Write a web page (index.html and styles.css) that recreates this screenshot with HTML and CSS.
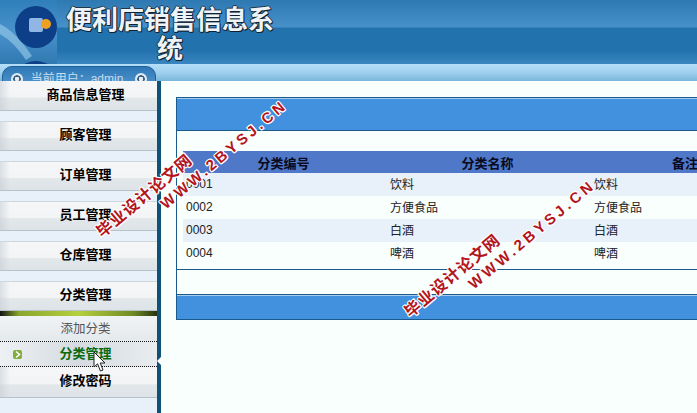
FILE: index.html
```
<!DOCTYPE html>
<html lang="zh">
<head>
<meta charset="utf-8">
<title>便利店销售信息系统</title>
<link rel="stylesheet" href="styles.css">
</head>
<body>
<div class="page">
  <header class="header">
    <div class="logo">
      <svg width="57" height="64" viewBox="0 0 57 64">
        <defs>
          <linearGradient id="bg" x1="0" y1="0" x2="0" y2="1"><stop offset="0" stop-color="#2f7fbb"/><stop offset="0.5" stop-color="#4a92cc"/><stop offset="1" stop-color="#2f78b0"/></linearGradient>
        </defs>
        <rect width="57" height="64" fill="url(#bg)"/>
        <path d="M0 24 Q16 32 32 56 L26 60 Q14 42 0 34Z" fill="#8fc3e6" opacity=".7"/>
        <circle cx="36" cy="27" r="21" fill="#0c3f87"/>
        <rect x="29" y="18" width="14" height="14" rx="2" fill="#8fb6e4"/>
        <circle cx="46" cy="24" r="5" fill="#f0a020"/>
        <circle cx="36" cy="84" r="23" fill="#0c3f87"/>
      </svg>
    </div>
    <h1 class="title">便利店销售信息系统</h1>
  </header>
  <div class="band">
    <div class="user-tab">
      <span class="radio"></span>
      <span class="user-text">当前用户：admin</span>
      <span class="radio"></span>
    </div>
  </div>
  <div class="body">
    <nav class="sidebar">
      <a class="nav first">商品信息管理</a>
      <a class="nav">顾客管理</a>
      <a class="nav">订单管理</a>
      <a class="nav">员工管理</a>
      <a class="nav">仓库管理</a>
      <a class="nav open">分类管理</a>
      <div class="rule"></div>
      <a class="sub">添加分类</a>
      <a class="sub active"><span class="bullet"><svg width="9" height="9" viewBox="0 0 9 9"><path d="M3 1.5 L6.5 4.5 L3 7.5" fill="none" stroke="#fff" stroke-width="1.6"/></svg></span>分类管理</a>
      <a class="nav last">修改密码</a>
    </nav>
    <div class="divider"><span class="notch"></span></div>
    <main class="main">
      <section class="panel">
        <div class="bar top"></div>
        <div class="content">
          <table class="grid">
            <thead><tr><th>分类编号</th><th>分类名称</th><th class="wide">备注</th></tr></thead>
            <tbody>
              <tr><td>0001</td><td>饮料</td><td>饮料</td></tr>
              <tr><td>0002</td><td>方便食品</td><td>方便食品</td></tr>
              <tr><td>0003</td><td>白酒</td><td>白酒</td></tr>
              <tr><td>0004</td><td>啤酒</td><td>啤酒</td></tr>
            </tbody>
          </table>
        </div>
        <div class="spacer"></div>
        <div class="bar bottom"></div>
      </section>
    </main>
  </div>
  <div class="mark mark-a">
    <div class="mark-cn">毕业设计论文网</div>
    <div class="mark-en">WWW.2BYSJ.CN</div>
  </div>
  <div class="mark mark-b">
    <div class="mark-cn">毕业设计论文网</div>
    <div class="mark-en">WWW.2BYSJ.CN</div>
  </div>
  <svg class="cursor" width="14" height="22" viewBox="0 0 14 22"><path d="M1 1 L1 16 L4.6 12.8 L7.4 20 L10 19 L7.2 12 L12 12 Z" fill="#fff" stroke="#222" stroke-width="1"/></svg>
</div>
</body>
</html>
```
FILE: styles.css
```
* { box-sizing: border-box; }
html, body { margin: 0; padding: 0; }
body { font-family: "Liberation Sans", "Noto Sans CJK SC", sans-serif; font-size: 12px; color: #111; }
.page { position: relative; width: 697px; height: 413px; overflow: hidden; background: #f8fffc; display: flex; flex-direction: column; }

.header { height: 64px; flex: none; display: flex; background: linear-gradient(#2f79b3 0, #4791cb 27px, #2272ae 28px, #2272ae 50px, #3a86c0 64px); }
.logo { width: 57px; height: 64px; flex: none; }
.logo svg { display: block; }
.title { margin: 3px 0 0 7px; width: 212px; font-family: "Noto Sans CJK SC", sans-serif; font-size: 26px; line-height: 29px; font-weight: 700; color: #eef3f8; text-align: center; text-shadow: 1px 1px 0 #0d2233, -1px 0 0 #24384a, 0 -1px 0 #24384a, 1px 0 0 #1a2c3c, 0 1px 0 #1a2c3c; }

.band { height: 17px; flex: none; padding: 2px 0 0 2px; overflow: hidden; background: linear-gradient(#b4def8, #9fd0ef 50%, #79b6d9); }
.user-tab { width: 154px; height: 26px; border-radius: 10px 10px 0 0; border: 1px solid #1d5f96; background: linear-gradient(#2e78b6, #5b9cd2); display: flex; justify-content: space-between; padding: 5px 8px 0; color: #c4dcf1; line-height: 14px; font-size: 13px; }
.user-text { font-family: "Liberation Sans", "Noto Sans CJK SC", sans-serif; font-size: 12px; margin-right: 4px; }
.radio { width: 12px; height: 12px; margin-top: 1px; border-radius: 50%; background: radial-gradient(circle, #e8eef3 0 2px, #3a5f80 2.5px 3.5px, #dfe9f2 4px); }

.body { flex: 1; display: flex; min-height: 0; }
.sidebar { width: 157px; flex: none; display: flex; flex-direction: column; background: #e8f0f9; overflow: hidden; }
.nav { display: block; flex: none; height: 30px; margin-bottom: 10px; padding-left: 14px; text-align: center; font-weight: 700; font-size: 13px; line-height: 24px; color: #000; font-family: "Noto Sans CJK SC", sans-serif; border-top: 1px solid #ccd6dd; border-bottom: 1px solid #b9c2c9; background: linear-gradient(90deg, rgba(200,208,214,.6), rgba(255,255,255,0) 10px), linear-gradient(#f4f6f8 0, #f2f4f6 55%, #e2e7ea 60%, #dde3e7 100%); }
.nav.first { border-top: 0; line-height: 25px; }
.nav.open { margin-bottom: 0; }
.nav.last { margin-bottom: 0; height: 31px; line-height: 26px; border-top: 0; }
.rule { height: 5px; flex: none; background: linear-gradient(90deg, #111 0, #8aa62e 12%, #b7d03e 50%, #6f8a25 85%, #26330f 100%); }
.sub { display: block; position: relative; flex: none; height: 26px; padding-left: 14px; text-align: center; font-size: 12.5px; line-height: 23px; color: #555; font-family: "Noto Sans CJK SC", sans-serif; border-bottom: 1px dotted #111; background: linear-gradient(#f1f3f5, #e4e9ec); }
.sub.active { height: 25px; color: #0a6a10; font-weight: 700; font-size: 13px; line-height: 22px; background: linear-gradient(90deg, #eef1f3, #d5dbe0 50%, #e9edf0); }
.bullet { position: absolute; left: 13px; top: 8px; width: 9px; height: 9px; border-radius: 2px; background: #7fae3c; }
.bullet svg { display: block; }

.divider { width: 4px; flex: none; background: #0f5276; position: relative; }
.notch { position: absolute; left: 0; top: 276px; width: 0; height: 0; border: 4px solid transparent; border-right: 4px solid #fff; border-left: 0; }

.main { flex: 1; min-width: 0; overflow: hidden; padding: 16px 0 0 15px; background: #f8fffc; }
.panel { width: 660px; border: 1px solid #1c5a8c; border-right: 0; }
.bar { background: #4191de; border: solid #a5cdf0; border-width: 1px 0 0; }
.bar.top { height: 33px; border-bottom: 1px solid #1c5a8c; }
.bar.bottom { height: 25px; border-top: 1px solid #1c5a8c; box-shadow: inset 0 1px 0 #a5cdf0; }
.content { padding: 20px 0 4px 6px; background: #f8fffc; border-bottom: 1px solid #1c5a8c; }
.spacer { height: 24px; }
.grid { border-collapse: collapse; table-layout: fixed; width: 640px; }
.grid th { height: 22px; padding: 0 3px 0 0; background: #4f78c9; font-family: "Noto Sans CJK SC", sans-serif; font-size: 13px; font-weight: 700; text-align: center; color: #0a0a1e; width: 204px; }
.grid th.wide { width: 232px; padding-right: 44px; }
.grid td { height: 23px; padding: 0 0 2px 3px; font-family: "Liberation Sans", "Noto Sans CJK SC", sans-serif; font-size: 12px; color: #222; }
.grid tbody tr:nth-child(odd) td { background: #e8f0f9; }

.mark { position: absolute; color: #b31520; font-family: "Noto Sans CJK SC", sans-serif; font-weight: 700; transform: rotate(-40deg); transform-origin: 0 0; white-space: nowrap; pointer-events: none; text-shadow: 1px 0 0 #fff, -1px 0 0 #fff, 0 1px 0 #fff, 0 -1px 0 #fff, 1px 1px 0 #fff, -1px -1px 0 #fff, 1px -1px 0 #fff, -1px 1px 0 #fff; }
.mark-cn { font-size: 16px; line-height: 18px; letter-spacing: 1px; }
.mark-en { font-family: "Liberation Sans", sans-serif; font-size: 15px; line-height: 16px; letter-spacing: 3.4px; margin: 4px 0 0 67px; }
.mark-a { left: 92px; top: 226px; }
.mark-b { left: 400px; top: 306px; }
.cursor { position: absolute; left: 93px; top: 351px; }
```
